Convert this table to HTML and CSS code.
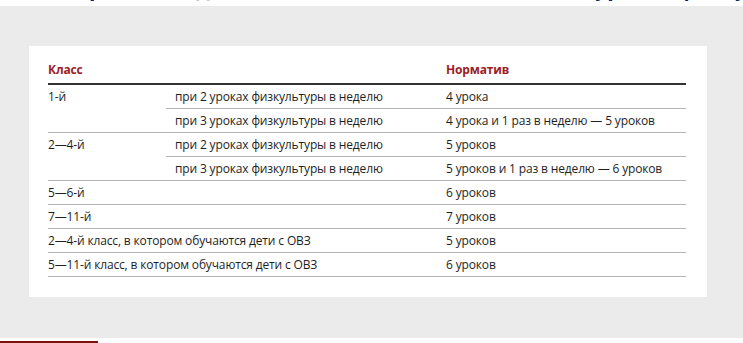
FILE: index.html
```html
<!DOCTYPE html>
<html lang="ru">
<head>
<meta charset="utf-8">
<link rel="stylesheet" href="styles.css">
</head>
<body>
<div class="topline"><h2 class="heading">Нормативы двигательной активности: сколько уроков физкультуры нужно в неделю</h2></div>
<section class="stage">
  <div class="card">
    <table class="norms">
      <colgroup>
        <col class="c1"><col class="c2"><col class="c3">
      </colgroup>
      <thead>
        <tr><th colspan="2" class="first">Класс</th><th>Норматив</th></tr>
      </thead>
      <tbody>
        <tr><td rowspan="2" class="first">1-й</td><td>при 2 уроках физкультуры в неделю</td><td>4 урока</td></tr>
        <tr><td>при 3 уроках физкультуры в неделю</td><td>4 урока и 1 раз в неделю — 5 уроков</td></tr>
        <tr><td rowspan="2" class="first">2—4-й</td><td>при 2 уроках физкультуры в неделю</td><td>5 уроков</td></tr>
        <tr><td>при 3 уроках физкультуры в неделю</td><td>5 уроков и 1 раз в неделю — 6 уроков</td></tr>
        <tr><td colspan="2" class="first">5—6-й</td><td>6 уроков</td></tr>
        <tr><td colspan="2" class="first">7—11-й</td><td>7 уроков</td></tr>
        <tr><td colspan="2" class="first">2—4-й класс, в котором обучаются дети с ОВЗ</td><td>5 уроков</td></tr>
        <tr><td colspan="2" class="first">5—11-й класс, в котором обучаются дети с ОВЗ</td><td>6 уроков</td></tr>
      </tbody>
    </table>
  </div>
</section>
<div class="foot"><div class="redline"></div></div>
</body>
</html>
```
FILE: styles.css
```css
html, body {
  margin: 0;
  padding: 0;
  background: #ffffff;
  font-family: "Open Sans", "Noto Sans", sans-serif;
}
.topline {
  height: 6px;
  overflow: hidden;
  background: #fff;
  padding-left: 60px;
}
.heading {
  margin: -22px 0 0 0;
  font-size: 21px;
  line-height: 20px;
  font-weight: 700;
  color: #0c1f5e;
  white-space: nowrap;
}
.stage {
  background: #ebebeb;
  padding: 40px 36px 41px 29px;
}
.card {
  background: #ffffff;
  width: 678px;
  height: 251px;
  box-sizing: border-box;
  padding: 15px 21px 0 19px;
}
.norms {
  width: 638px;
  border-collapse: collapse;
  table-layout: fixed;
  font-size: 12px;
  letter-spacing: -0.15px;
  color: #1e1e1e;
}
.c1 { width: 118px; }
.c2 { width: 271px; }
.c3 { width: 249px; }
.norms th {
  text-align: left;
  color: #9b1d25;
  font-weight: 700;
  height: 22px;
  padding: 0 0 0 9px;
  vertical-align: top;
  border-bottom: 2px solid #333333;
}
.norms td {
  height: 23px;
  padding: 0 0 0 9px;
  border-bottom: 1px solid #b4b4b4;
  white-space: nowrap;
  vertical-align: top;
  line-height: 23px;
}
.norms .first {
  padding-left: 0;
}
.foot {
  height: 5px;
  padding-top: 3px;
}
.redline {
  width: 98px;
  height: 2px;
  background: #7a1111;
}
```
